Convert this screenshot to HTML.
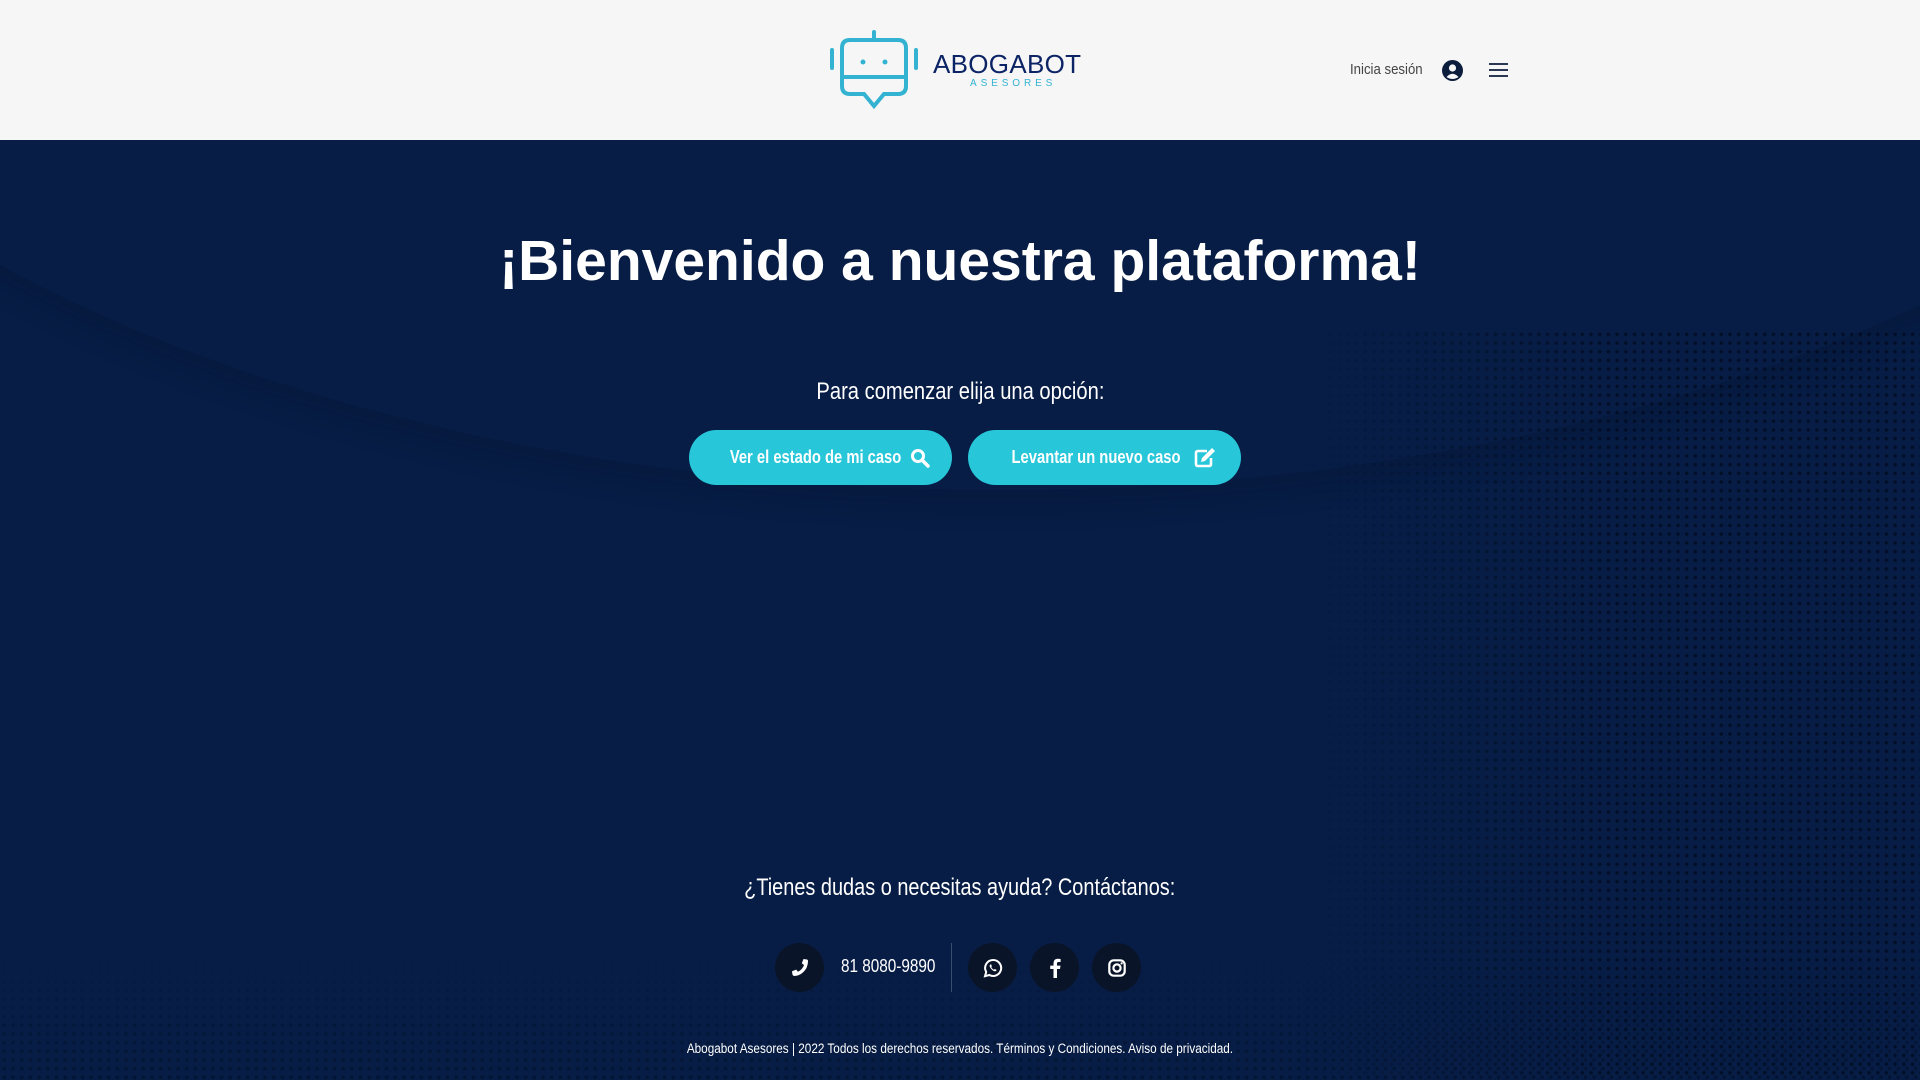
<!DOCTYPE html>
<html><head><meta charset="utf-8"><style>
*{margin:0;padding:0;box-sizing:border-box}
html,body{width:1920px;height:1080px;overflow:hidden}
body{font-family:"Liberation Sans",sans-serif;background:#071d45;position:relative}
header{position:absolute;left:0;top:0;width:1920px;height:140px;background:#f6f6f6}
main{position:absolute;left:0;top:140px;width:1920px;height:940px;background:#071d45;overflow:hidden}
.dots{position:absolute;background-image:radial-gradient(circle,#020c22 1.6px,transparent 2px);background-size:8.7px 8.7px}
.c{position:absolute;left:0;width:1920px;text-align:center;color:#fff;white-space:nowrap}
.n{display:inline-block;transform:scaleX(.84);transform-origin:center}
.btn{position:absolute;top:430px;height:55px;border-radius:28px;background:#27c6d9;color:#fff;font-weight:bold;font-size:18px;display:flex;align-items:center;justify-content:center;white-space:nowrap}
.circ{position:absolute;top:943px;width:49px;height:49px;border-radius:50%;background:#0a1428;display:flex;align-items:center;justify-content:center}
</style></head><body>
<header>
<svg style="position:absolute;left:828px;top:30px" width="92" height="80" viewBox="0 0 92 80" fill="none" stroke="#33b3d1" stroke-width="4" stroke-linecap="round">
<line x1="46" y1="2" x2="46" y2="10"/>
<line x1="4" y1="20" x2="4" y2="38"/><line x1="88" y1="20" x2="88" y2="38"/>
<path d="M22 10 H70 Q78 10 78 18 V56 Q78 64 70 64 H56 L46 76 L36 64 H22 Q14 64 14 56 V18 Q14 10 22 10 Z"/>
<line x1="14" y1="47" x2="78" y2="47"/>
<circle cx="35" cy="32" r="2.5" fill="#33b3d1" stroke="none"/><circle cx="57" cy="32" r="2.5" fill="#33b3d1" stroke="none"/>
</svg>
<div style="position:absolute;left:933px;top:50px;font-size:26px;color:#0c2466;line-height:28px;letter-spacing:0.3px">ABOGABOT</div>
<div style="position:absolute;left:970px;top:78px;font-size:10px;color:#33b3d1;letter-spacing:3.9px;line-height:12px">ASESORES</div>
<div style="position:absolute;left:1350px;top:61px;width:82px;font-size:15px;color:#444;line-height:18px;white-space:nowrap"><span style="display:inline-block;transform:scaleX(.88);transform-origin:left">Inicia sesión</span></div>
<svg style="position:absolute;left:1442px;top:60px" width="21" height="21" viewBox="0 0 21 21"><circle cx="10.5" cy="10.5" r="10.5" fill="#0c1c3c"/><circle cx="10.5" cy="8" r="3.6" fill="#f6f6f6"/><path d="M4.5 17 Q10.5 10.5 16.5 17 Q10.5 21 4.5 17Z" fill="#f6f6f6"/></svg>
<svg style="position:absolute;left:1489px;top:62px" width="19" height="16"><g stroke="#0c1c3c" stroke-width="1.8"><line x1="0" y1="2" x2="19" y2="2"/><line x1="0" y1="8" x2="19" y2="8"/><line x1="0" y1="14" x2="19" y2="14"/></g></svg>
</header>
<main>
<div style="position:absolute;left:-400px;top:-1150px;width:2800px;height:1500px;border-radius:50%;box-shadow:0 12px 30px rgba(0,10,35,.18)"></div>
<div class="dots" style="left:1300px;top:190px;width:620px;height:750px;opacity:.8;-webkit-mask-image:linear-gradient(90deg,transparent,#000 50%);mask-image:linear-gradient(90deg,transparent,#000 50%)"></div>
<div class="dots" style="left:0;top:820px;width:1920px;height:120px;opacity:.5;-webkit-mask-image:linear-gradient(180deg,transparent,#000);mask-image:linear-gradient(180deg,transparent,#000)"></div>
</main>
<div class="c" style="top:226px;font-weight:bold;font-size:57px;line-height:70px">¡Bienvenido a nuestra plataforma!</div>
<div class="c" style="top:377px;font-size:24px;line-height:30px"><span class="n">Para comenzar elija una opción:</span></div>
<div class="btn" style="left:689px;width:263px"><span style="display:inline-block;transform:scaleX(.82)">Ver el estado de mi caso</span>
<svg style="margin-left:-10px" width="20" height="20" viewBox="0 0 20 20"><circle cx="8" cy="8" r="5.5" fill="none" stroke="#fff" stroke-width="3"/><line x1="12" y1="12" x2="18" y2="18" stroke="#fff" stroke-width="3.5" stroke-linecap="round"/></svg></div>
<div class="btn" style="left:968px;width:273px"><span style="display:inline-block;transform:scaleX(.82)">Levantar un nuevo caso</span>
<svg style="margin-left:-6px" width="22" height="20" viewBox="0 0 22 20"><path d="M13 3H4Q2 3 2 5V16Q2 18 4 18H15Q17 18 17 16V10" fill="none" stroke="#fff" stroke-width="2.6"/><path d="M18 0L21 3L11 13L7 14L8 10Z" fill="#fff"/></svg></div>
<div class="c" style="top:873px;font-size:24px;line-height:30px"><span class="n" style="transform:scaleX(.83)">¿Tienes dudas o necesitas ayuda? Contáctanos:</span></div>
<div class="circ" style="left:775px"><svg width="20" height="20" viewBox="0 0 20 20"><path d="M17 1.5L13.5 1 11.8 5.2 14 7Q12.5 11.5 8 13.8L6.2 11.6 2 13.3 2.5 16.8Q3 18 4.5 18 12 17.5 16.5 10 18 6 18 3 18 1.8 17 1.5Z" fill="#fff"/></svg></div>
<div style="position:absolute;left:841px;top:955px;font-size:18px;color:#fff;line-height:22px;white-space:nowrap"><span style="display:inline-block;transform:scaleX(.85);transform-origin:left">81 8080-9890</span></div>
<div style="position:absolute;left:951px;top:943px;width:1px;height:49px;background:#3a4d70"></div>
<div class="circ" style="left:968px"><svg width="20" height="20" viewBox="0 0 20 20"><path d="M10 2A8 8 0 0 0 3.2 14L2 18.2 6.3 17A8 8 0 1 0 10 2Z" fill="none" stroke="#fff" stroke-width="2"/><path d="M7.2 6.5Q6.3 7.3 6.8 8.8 8 11.6 11 13.1 12.6 13.6 13.4 12.6L13.4 11.8 11.7 11 10.9 11.8Q9 10.9 8.2 9L8.9 8.2 8.2 6.5Z" fill="#fff"/></svg></div>
<div class="circ" style="left:1030px"><svg width="12" height="20" viewBox="0 0 12 20"><path d="M8 20V11H11L11.5 7.6H8V5.5Q8 4 9.6 4H11.6V1Q10.5.8 9 .8 4.5.8 4.5 5.2V7.6H1.2V11H4.5V20Z" fill="#fff"/></svg></div>
<div class="circ" style="left:1092px"><svg width="18" height="18" viewBox="0 0 18 18"><rect x="1.3" y="1.3" width="15.4" height="15.4" rx="4.5" fill="none" stroke="#fff" stroke-width="2.2"/><circle cx="9" cy="9" r="3.6" fill="none" stroke="#fff" stroke-width="2.2"/><circle cx="13.6" cy="4.4" r="1.1" fill="#fff"/></svg></div>
<div class="c" style="top:1041px;font-size:13.5px;line-height:16px"><span class="n" style="transform:scaleX(.87)">Abogabot Asesores | 2022 Todos los derechos reservados. Términos y Condiciones. Aviso de privacidad.</span></div>
</body></html>
